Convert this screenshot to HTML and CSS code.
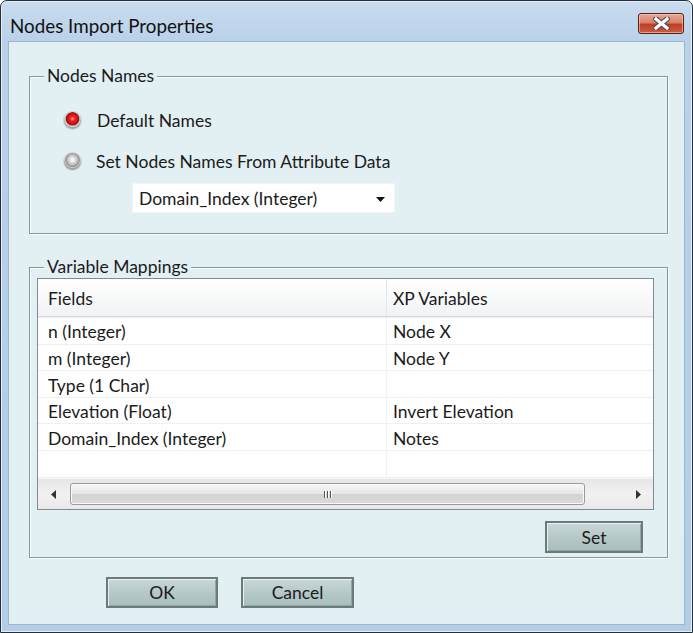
FILE: index.html
```html
<!DOCTYPE html>
<html>
<head>
<meta charset="utf-8">
<title>Nodes Import Properties</title>
<link rel="stylesheet" href="styles.css">
</head>
<body>
<div class="window">
  <div class="titlebar">
    <span class="title">Nodes Import Properties</span>
    <button class="close" aria-label="Close">
      <svg width="17" height="13" viewBox="0 0 17 13">
        <path d="M3 2 L14 11 M14 2 L3 11" stroke="#4f4f4f" stroke-width="5.5" stroke-linecap="square"/>
        <path d="M3 2 L14 11 M14 2 L3 11" stroke="#ffffff" stroke-width="3.2" stroke-linecap="square"/>
      </svg>
    </button>
  </div>
  <div class="client">
    <div class="group g1">
      <span class="legend">Nodes Names</span>
      <div class="radio-row"><span class="radio on"></span><span class="rlabel">Default Names</span></div>
      <div class="radio-row r2"><span class="radio off"></span><span class="rlabel">Set Nodes Names From Attribute Data</span></div>
      <div class="select">
        <span>Domain_Index (Integer)</span>
        <svg class="caret" width="9" height="5" viewBox="0 0 9 5"><path d="M0 0 H9 L4.5 5 Z" fill="#111"/></svg>
      </div>
    </div>
    <div class="group g2">
      <span class="legend">Variable Mappings</span>
      <div class="list">
        <div class="lrow head"><div class="c1">Fields</div><div class="c2">XP Variables</div></div>
        <div class="lrow h28"><div class="c1">n (Integer)</div><div class="c2">Node X</div></div>
        <div class="lrow h26"><div class="c1">m (Integer)</div><div class="c2">Node Y</div></div>
        <div class="lrow h27"><div class="c1">Type (1 Char)</div><div class="c2"></div></div>
        <div class="lrow h26"><div class="c1">Elevation (Float)</div><div class="c2">Invert Elevation</div></div>
        <div class="lrow h27"><div class="c1">Domain_Index (Integer)</div><div class="c2">Notes</div></div>
        <div class="lrow h27"><div class="c1"></div><div class="c2"></div></div>
        <div class="hscroll">
          <div class="sarrow"><svg width="5" height="9" viewBox="0 0 5 9"><path d="M5 0 V9 L0 4.5 Z" fill="#333"/></svg></div>
          <div class="thumb"><span class="grip"></span><span class="grip"></span><span class="grip"></span></div>
          <div class="track"></div>
          <div class="sarrow"><svg width="5" height="9" viewBox="0 0 5 9"><path d="M0 0 V9 L5 4.5 Z" fill="#333"/></svg></div>
        </div>
      </div>
      <div class="set-row"><button class="btn set">Set</button></div>
    </div>
    <div class="footer">
      <button class="btn ok">OK</button>
      <button class="btn cancel">Cancel</button>
    </div>
  </div>
</div>
</body>
</html>
```

FILE: styles.css
```css
* { box-sizing: border-box; }
html, body { margin: 0; padding: 0; }
body {
  width: 693px;
  height: 633px;
  overflow: hidden;
  background: #ffffff;
  font-family: Lato, "Open Sans", sans-serif;
  font-size: 17.5px;
  color: #1b1b1b;
}
.window {
  width: 693px;
  height: 633px;
  border: 1px solid #25303b;
  border-radius: 7px 7px 0 0;
  background: linear-gradient(#cadcee, #b9d1e9 40px, #b3cde7);
  box-shadow: inset 0 0 0 1px #e3eef9;
  padding: 0 7px 7px 7px;
  display: flex;
  flex-direction: column;
}
.titlebar {
  height: 40px;
  display: flex;
  align-items: flex-start;
  justify-content: space-between;
  padding: 0 1px 0 2px;
  flex: none;
}
.title {
  margin-top: 13px;
  line-height: 24px;
  font-size: 18.8px;
  color: #111;
}
.close {
  margin-top: 12px;
  width: 46px;
  height: 21px;
  padding: 0;
  border: 1px solid #5a1e14;
  border-radius: 3px;
  background: linear-gradient(#e6a897, #d6826b 45%, #c13c24 55%, #cc5e43);
  box-shadow: inset 0 0 0 1px rgba(255, 215, 205, 0.55);
  display: flex;
  align-items: center;
  justify-content: center;
}
.client {
  flex: 1;
  background: #e2eff3;
  border: 1px solid #9db6cb;
  padding: 34px 16px 0 20px;
  display: flex;
  flex-direction: column;
}
.group {
  position: relative;
  border: 1px solid #87989a;
  box-shadow: inset 1px 1px 0 #fbfdfd, 1px 1px 0 #fbfdfd;
}
.legend {
  position: absolute;
  top: -11px;
  left: 14px;
  padding: 0 3px;
  line-height: 20px;
  background: #e2eff3;
  color: #1b1b1b;
}
.g1 {
  padding: 29px 0 20px 34px;
}
.radio-row {
  height: 28px;
  display: flex;
  align-items: center;
}
.radio-row.r2 { margin-top: 13px; }
.rlabel { margin-left: 16px; }
.r2 .rlabel { margin-left: 15px; }
.radio {
  width: 17px;
  height: 17px;
  border-radius: 50%;
  flex: none;
}
.radio.on {
  background: radial-gradient(circle at 50% 40%, #ff9a8e 0, #ec2020 2.5px, #d01414 5px, #8e0c0c 6.3px, #a4a4a4 6.8px, #dadada 7.7px, #a8a8a8 8.5px);
  box-shadow: 0 0 0 1px #cfcfcf;
}
.radio.off {
  background: radial-gradient(circle at 50% 40%, #ffffff 0, #e4e4e4 2.5px, #b4b4b4 5.5px, #8e8e8e 6.8px, #d0d0d0 7.7px, #a2a2a2 8.5px);
  box-shadow: 0 0 0 1px #d4d4d4;
}
.select {
  margin: 8px 0 0 68px;
  width: 263px;
  height: 30px;
  background: #ffffff;
  border: 1px solid #f1f5f5;
  display: flex;
  align-items: center;
  justify-content: space-between;
  padding: 0 9px 0 6px;
}
.caret { margin-top: 2px; }
.g2 {
  margin-top: 33px;
  padding: 10px 0 4px 0;
}
.list {
  margin-left: 7px;
  width: 617px;
  height: 232px;
  border: 1px solid #848a92;
  background: #ffffff;
  display: flex;
  flex-direction: column;
}
.lrow {
  display: flex;
  border-bottom: 1px solid #efefef;
  flex: none;
}
.lrow .c1 {
  width: 349px;
  border-right: 1px solid #f0f0f0;
  padding-left: 10px;
  padding-top: 2px;
  display: flex;
  align-items: center;
}
.lrow .c2 {
  flex: 1;
  padding-left: 6px;
  padding-top: 2px;
  display: flex;
  align-items: center;
}
.lrow.head {
  height: 38px;
  background: linear-gradient(#ffffff, #f7f8f9 60%, #f1f2f3);
  border-bottom: 1px solid #d6d9dc;
  box-shadow: 0 1px 0 #eceeef;
}
.lrow.head .c1 { border-right-color: #e3e6e8; }
.h28 { height: 28px; }
.h27 { height: 27px; }
.h26 { height: 26px; }
.hscroll {
  flex: 1;
  display: flex;
  align-items: center;
  background: linear-gradient(#e6e6e6, #f1f1f1 50%, #e9e9e9);
  border-top: 1px solid #f7f7f7;
}
.sarrow {
  width: 30px;
  height: 100%;
  display: flex;
  align-items: center;
  justify-content: center;
  flex: none;
}
.thumb {
  margin-left: 2px;
  width: 515px;
  height: 22px;
  border: 1px solid #9a9a9a;
  border-radius: 3px;
  background: linear-gradient(#f7f7f7, #e6e6e6 50%, #d2d2d2 51%, #dadada);
  box-shadow: inset 0 0 0 1px #fafafa;
  display: flex;
  align-items: center;
  justify-content: center;
  gap: 2px;
}
.grip {
  width: 1px;
  height: 7px;
  background: #555;
  box-shadow: 1px 0 0 #fff;
}
.track { flex: 1; }
.set-row {
  display: flex;
  justify-content: flex-end;
  padding-right: 24px;
  margin-top: 11px;
}
.btn {
  font-family: Lato, "Open Sans", sans-serif;
  font-size: 17.5px;
  color: #1b1b1b;
  border: 2px solid #6b7b7c;
  background: linear-gradient(#cad8d8, #b6c8c8 50%, #a9bebe);
  box-shadow: inset 1px 1px 0 #e6eeee, inset -1px -1px 0 #92a5a5;
  padding: 0;
}
.set { width: 98px; height: 32px; }
.footer {
  margin-top: 19px;
  padding-left: 77px;
  display: flex;
  gap: 23px;
}
.ok { width: 112px; height: 31px; }
.cancel { width: 113px; height: 31px; }
```
